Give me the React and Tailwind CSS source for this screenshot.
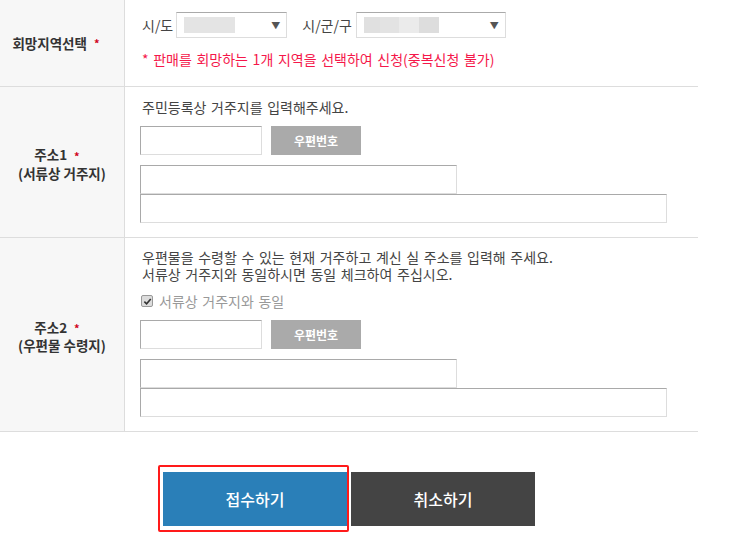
import React from "react";

const font = { fontFamily: '"Noto Sans CJK KR", "Noto Sans", sans-serif' };

function Star() {
  return <span className="ml-[7px] text-[11px] text-[#d0021b] align-middle">*</span>;
}

function Input({ w }) {
  return (
    <div
      className={`${w} h-[29px] bg-white border border-t-[#a9a9a9] border-l-[#a9a9a9] border-r-[#dddddd] border-b-[#dddddd]`}
    />
  );
}

function PostRow() {
  return (
    <div className="flex items-center gap-[9px]">
      <Input w="w-[122px]" />
      <div className="w-[90px] h-[29px] bg-[#aaaaaa] flex items-center justify-center text-white text-[12px] font-bold">
        우편번호
      </div>
    </div>
  );
}

function Address() {
  return (
    <div className="mt-[10px] flex flex-col">
      <Input w="w-[317px]" />
      <Input w="w-[527px]" />
    </div>
  );
}

function Select({ w, blur }) {
  return (
    <div
      className={`${w} shrink-0 h-[26px] bg-white border border-t-[#aaaaaa] border-l-[#dddddd] border-r-[#dddddd] border-b-[#dddddd] flex items-center pl-[7px] pr-[7px] relative`}
    >
      {blur}
      <span className="absolute right-[6px] top-[6px] text-[9px] text-[#555]">▼</span>
    </div>
  );
}

export default function App() {
  return (
    <div className="w-[730px] h-[542px] bg-white text-[#444]" style={font}>
      <div className="w-[698px]">
        {/* Row 1 */}
        <div className="flex h-[87px] border-b border-[#dddddd]">
          <div className="w-[125px] shrink-0 bg-[#f7f7f7] border-r border-[#dddddd] flex items-center justify-center text-[13.5px] font-bold text-[#333] pr-[12px]">
            <span>회망지역선택</span>
            <Star />
          </div>
          <div className="pl-[15px] pt-[12px] text-[14px] [word-spacing:1.5px]">
            <div className="flex items-center text-[#444] whitespace-nowrap">
              <span className="ml-[2px] mr-[3px] shrink-0">시/도</span>
              <Select
                w="w-[111px]"
                blur={<div className="w-[51px] h-[16px] bg-[#e4e4e4]" />}
              />
              <span className="ml-[15px] mr-[4px] shrink-0">시/군/구</span>
              <Select
                w="w-[150px]"
                blur={
                  <div className="flex h-[16px]">
                    <div className="w-[16px] bg-[#e0e0e0]" />
                    <div className="w-[19px] bg-[#e3e3e3]" />
                    <div className="w-[20px] bg-[#ebebeb]" />
                    <div className="w-[20px] bg-[#dddddd]" />
                  </div>
                }
              />
            </div>
            <div className="mt-[11px] ml-[2px] text-[#f5174a] whitespace-nowrap">
              * 판매를 회망하는 1개 지역을 선택하여 신청(중복신청 불가)
            </div>
          </div>
        </div>

        {/* Row 2 */}
        <div className="flex h-[151px] border-b border-[#dddddd]">
          <div className="w-[125px] shrink-0 bg-[#f7f7f7] border-r border-[#dddddd] flex flex-col items-center justify-center text-[13.5px] font-bold text-[#333] leading-[17px] pt-[4px]">
            <div className="pr-[10px]">
              주소1
              <Star />
            </div>
            <div>(서류상 거주지)</div>
          </div>
          <div className="pl-[15px] pt-[10px] text-[14px] [word-spacing:1.5px]">
            <div className="leading-[20px] mb-[9px] ml-[2px] whitespace-nowrap">주민등록상 거주지를 입력해주세요.</div>
            <PostRow />
            <Address />
          </div>
        </div>

        {/* Row 3 */}
        <div className="flex h-[194px] border-b border-[#dddddd]">
          <div className="w-[125px] shrink-0 bg-[#f7f7f7] border-r border-[#dddddd] flex flex-col items-center justify-center text-[13.5px] font-bold text-[#333] leading-[17px] pt-[4px]">
            <div className="pr-[10px]">
              주소2
              <Star />
            </div>
            <div>(우편물 수령지)</div>
          </div>
          <div className="pl-[15px] pt-[11px] text-[14px] [word-spacing:1.5px]">
            <div className="leading-[17px] ml-[2px] whitespace-nowrap">
              <div>우편물을 수령할 수 있는 현재 거주하고 계신 실 주소를 입력해 주세요.</div>
              <div>서류상 거주지와 동일하시면 동일 체크하여 주십시오.</div>
            </div>
            <div className="mt-[8px] mb-[9px] flex items-center h-[20px] text-[#999] whitespace-nowrap">
              <div className="w-[12px] h-[12px] ml-[1px] mr-[6px] rounded-[2px] border border-[#999] bg-[#dcdcdc] flex items-center justify-center">
                <svg viewBox="0 0 10 10" className="w-[9px] h-[9px]">
                  <path d="M1.5 5.2 L4 7.6 L8.6 2.2" fill="none" stroke="#333" strokeWidth="1.8" />
                </svg>
              </div>
              <span>서류상 거주지와 동일</span>
            </div>
            <PostRow />
            <Address />
          </div>
        </div>

        {/* Buttons */}
        <div className="flex justify-center pt-[40px]">
          <div className="flex gap-[4px]">
            <div className="relative">
              <div className="w-[184px] h-[54px] bg-[#2a7fb8] text-white text-[16px] font-medium flex items-center justify-center">
                접수하기
              </div>
              <div className="absolute left-[-5px] top-[-7px] w-[191px] h-[67px] border-2 border-[#ff1a1a] rounded-[2px] pointer-events-none" />
            </div>
            <div className="w-[184px] h-[54px] bg-[#444444] text-white text-[16px] font-medium flex items-center justify-center">
              취소하기
            </div>
          </div>
        </div>
      </div>
    </div>
  );
}
